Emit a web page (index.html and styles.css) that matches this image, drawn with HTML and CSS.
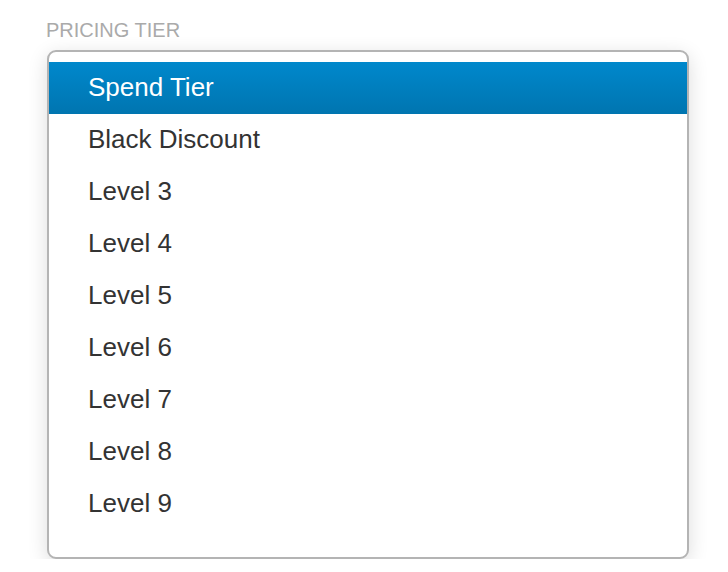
FILE: index.html
```html
<!DOCTYPE html>
<html>
<head>
<meta charset="utf-8">
<link rel="stylesheet" href="styles.css">
</head>
<body>
<div class="field">
  <div class="label">PRICING TIER</div>
  <ul class="menu">
    <li class="item active">Spend Tier</li>
    <li class="item">Black Discount</li>
    <li class="item">Level 3</li>
    <li class="item">Level 4</li>
    <li class="item">Level 5</li>
    <li class="item">Level 6</li>
    <li class="item">Level 7</li>
    <li class="item">Level 8</li>
    <li class="item">Level 9</li>
  </ul>
</div>
</body>
</html>
```
FILE: styles.css
```css
html, body {
  margin: 0;
  padding: 0;
  background: #ffffff;
  font-family: "Liberation Sans", Arial, sans-serif;
}
.field {
  padding: 19px 0 0 46px;
  width: 643px;
}
.label {
  font-size: 20px;
  line-height: 23px;
  color: #aaaaaa;
  margin-bottom: 8px;
}
.menu {
  list-style: none;
  margin: 0 0 0 1px;
  padding: 10px 0 27px;
  border: 2px solid #b4b4b4;
  border-radius: 9px;
  background: #fff;
  box-shadow: 0 5px 20px rgba(0, 0, 0, 0.14);
  overflow: hidden;
}
.item {
  height: 50px;
  line-height: 50px;
  padding: 0 0 2px 39px;
  font-size: 26px;
  color: #333333;
}
.item.active {
  color: #ffffff;
  background: linear-gradient(to bottom, #0088cc, #0075b0);
}
```
